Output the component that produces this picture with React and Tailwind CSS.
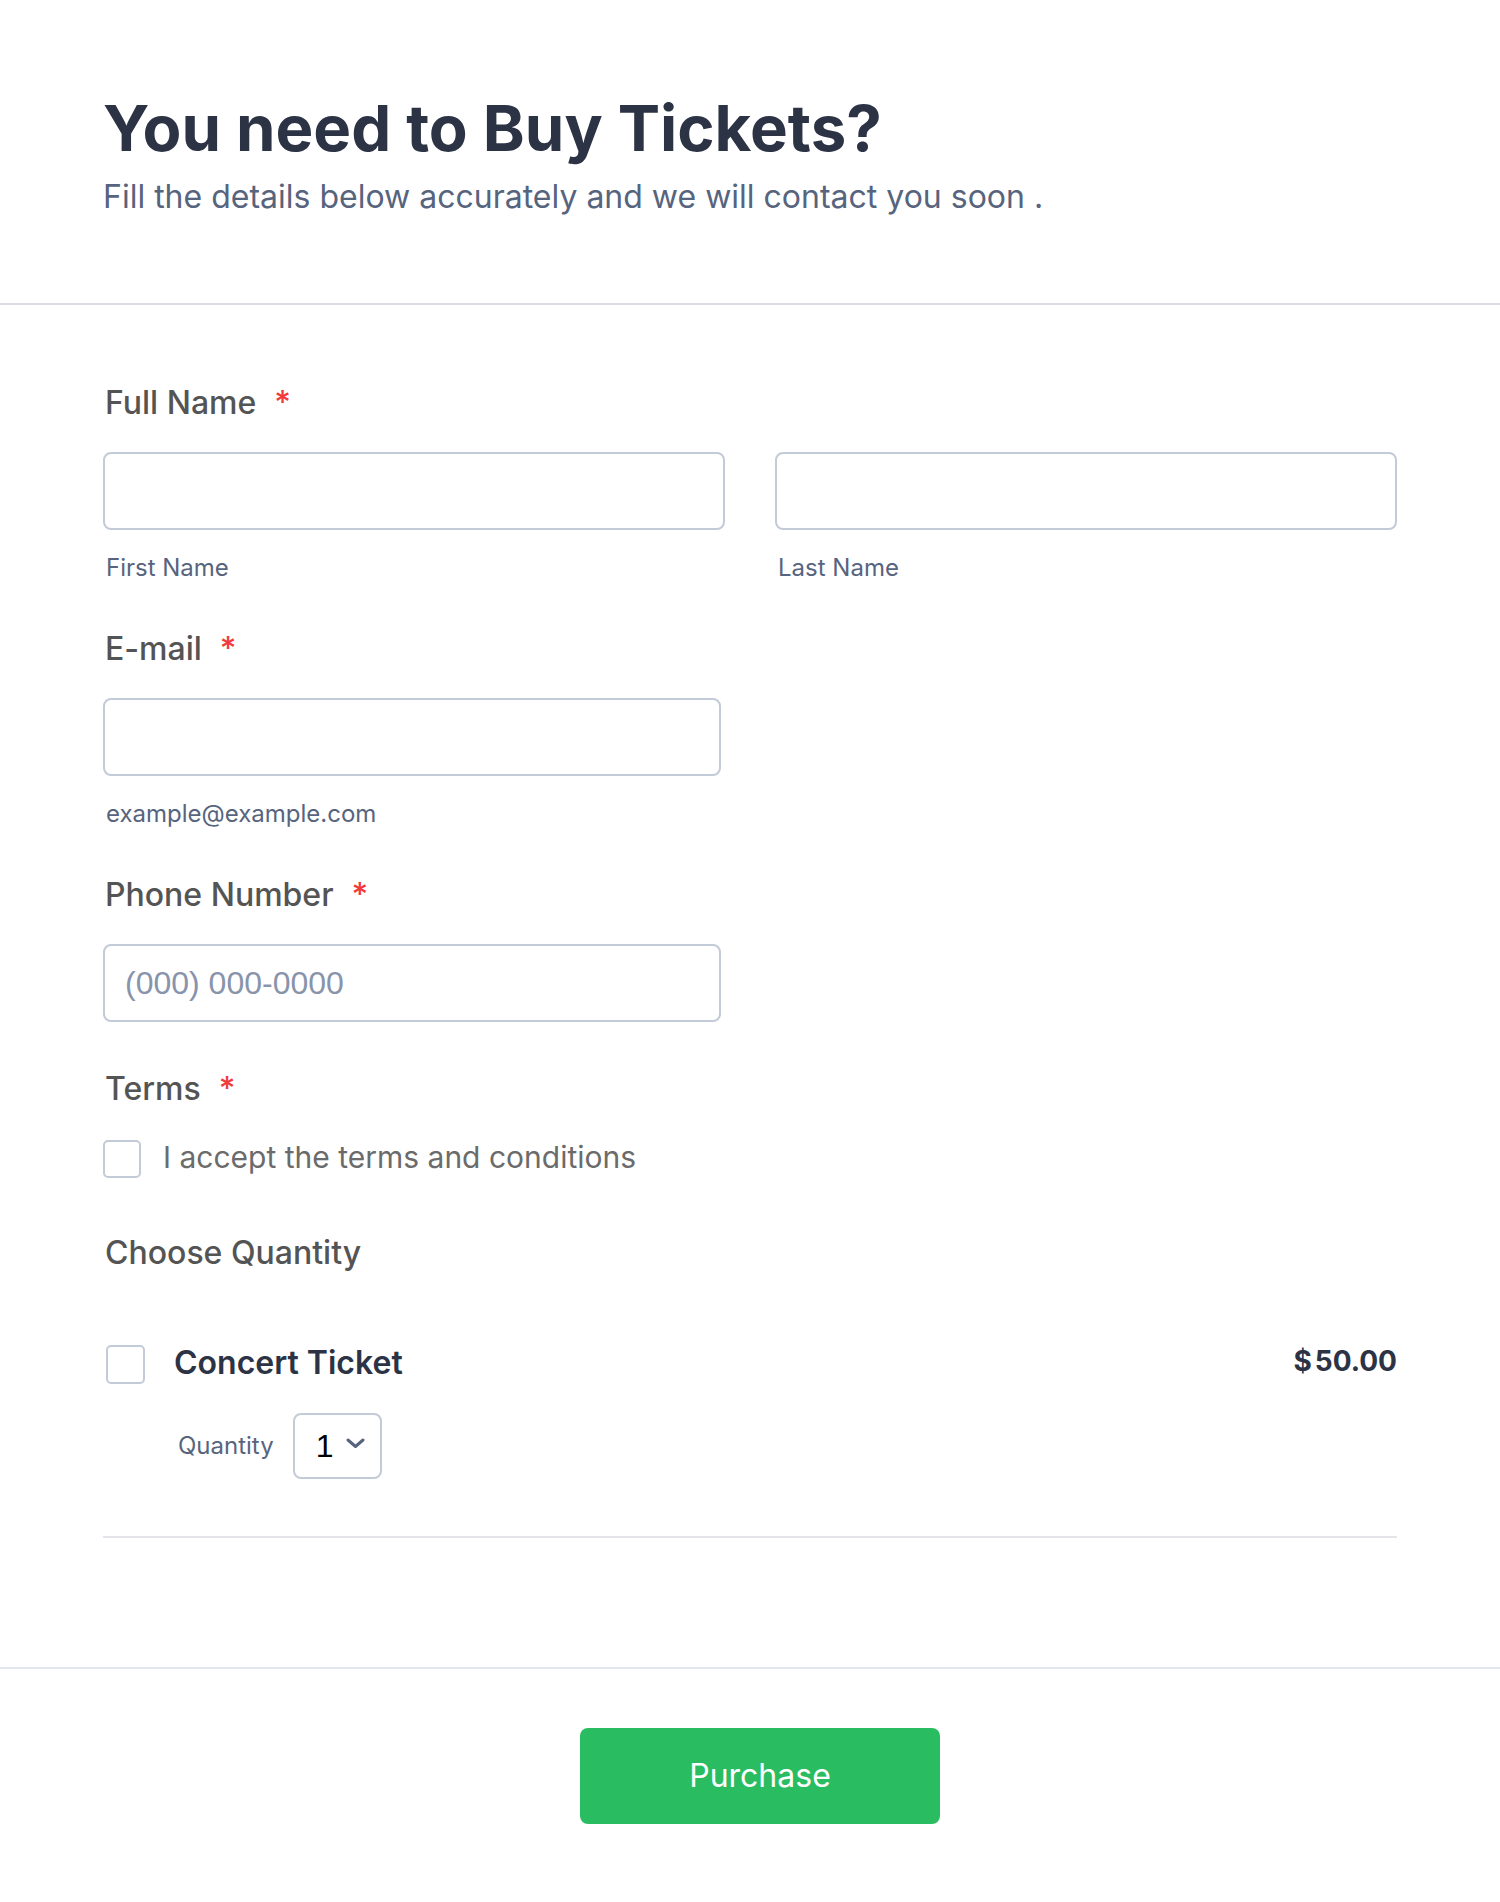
import { useState } from 'react';

function Label({ children, required, className = '' }) {
  return (
    <div className={`flex items-center text-[32px] leading-[40px] font-medium text-[#545454] ${className}`}>
      <span>{children}</span>
      {required && <span className="ml-[18px] text-[#f23a3c]">*</span>}
    </div>
  );
}

function TextBox({ placeholder = '', className = '' }) {
  return (
    <input
      type="text"
      placeholder={placeholder}
      className={`h-[78px] rounded-[8px] border-2 border-[#c3cad8] bg-white px-[20px] text-[32px] font-['Liberation_Sans',Arial,sans-serif] text-[#2c3345] outline-none placeholder:text-[#8894ab] ${className}`}
    />
  );
}

function SubLabel({ children, className = '' }) {
  return (
    <div className={`text-[24px] leading-[32px] text-[#57647e] ${className}`}>{children}</div>
  );
}

function Box({ checked, onToggle, className = '' }) {
  return (
    <button
      type="button"
      onClick={onToggle}
      className={`flex items-center justify-center rounded-[5px] border-2 border-[#c3cad8] bg-white ${className}`}
    >
      {checked && (
        <svg width="22" height="22" viewBox="0 0 24 24" fill="none" stroke="#2c3345" strokeWidth="3" strokeLinecap="round" strokeLinejoin="round">
          <path d="M20 6 9 17l-5-5" />
        </svg>
      )}
    </button>
  );
}

export default function App() {
  const [terms, setTerms] = useState(false);
  const [ticket, setTicket] = useState(false);

  return (
    <div className="min-h-[1902px] w-full bg-white font-['Inter','Noto_Sans',sans-serif]">
      {/* Header */}
      <div className="border-b-2 border-[#d9dbe6] px-[103px] pt-[90px] pb-[86px]">
        <h1 className="text-[63.5px] leading-[76px] font-bold text-[#2c3345]">You need to Buy Tickets?</h1>
        <p className="mt-[11px] text-[32px] leading-[40px] text-[#57647e]">
          Fill the details below accurately and we will contact you soon .
        </p>
      </div>

      {/* Form fields */}
      <div className="border-b-2 border-[#e3e6ef] px-[103px] pt-[78px] pb-[129px]">
        <Label required className="pl-[2px]">Full Name</Label>
        <div className="mt-[29px] grid grid-cols-2 gap-[50px]">
          <div>
            <TextBox className="w-full" />
            <SubLabel className="mt-[22px] pl-[3px]">First Name</SubLabel>
          </div>
          <div>
            <TextBox className="w-full" />
            <SubLabel className="mt-[22px] pl-[3px]">Last Name</SubLabel>
          </div>
        </div>

        <Label required className="mt-[45px] pl-[2px]">E-mail</Label>
        <TextBox className="mt-[29px] block w-[618px]" />
        <SubLabel className="mt-[22px] pl-[3px]">example@example.com</SubLabel>

        <Label required className="mt-[45px] pl-[2px]">Phone Number</Label>
        <TextBox placeholder="(000) 000-0000" className="mt-[29px] block w-[618px]" />

        <Label required className="mt-[47px] pl-[2px]">Terms</Label>
        <div className="mt-[30px] flex h-[40px] items-center">
          <Box checked={terms} onToggle={() => setTerms(!terms)} className="h-[38px] w-[38px]" />
          <span className="ml-[22px] -mt-[4px] text-[30px] leading-[40px] text-[#6b6b6b]">
            I accept the terms and conditions
          </span>
        </div>

        <Label className="mt-[54px] pl-[2px]">Choose Quantity</Label>

        {/* Product */}
        <div className="mt-[70px] flex items-start justify-between">
          <div className="flex items-start">
            <Box checked={ticket} onToggle={() => setTicket(!ticket)} className="mt-[2px] ml-[3px] h-[39px] w-[39px]" />
            <span className="ml-[29px] text-[32px] leading-[40px] font-semibold text-[#2c3345]">Concert Ticket</span>
          </div>
          <div className="-mt-[2px] text-[28px] leading-[40px] font-bold text-[#2c3345]">
            <span className="mr-[3px]">$</span>50.00
          </div>
        </div>
        <div className="mt-[29px] flex items-center pl-[75px]">
          <span className="text-[24px] leading-[32px] text-[#57647e]">Quantity</span>
          <div className="ml-[19px] flex h-[66px] w-[89px] items-center rounded-[8px] border-2 border-[#c3cad8] bg-white pl-[21px]">
            <span className="font-['Liberation_Sans',Arial,sans-serif] text-[32px] leading-[40px] text-black">1</span>
            <svg className="ml-[13px] -mt-[6px]" width="19" height="11" viewBox="0 0 19 11" fill="none" stroke="#57647e" strokeWidth="3" strokeLinecap="round" strokeLinejoin="round">
              <path d="M2 2l7.5 6.5L17 2" />
            </svg>
          </div>
        </div>
        <div className="mt-[57px] h-[2px] bg-[#e3e5ea]" />
      </div>

      {/* Submit */}
      <div className="flex justify-center pt-[59px] pb-[80px] pl-[20px]">
        <button
          type="button"
          className="h-[96px] w-[360px] rounded-[8px] bg-[#2abc60] text-[32px] text-white"
        >
          Purchase
        </button>
      </div>
    </div>
  );
}
